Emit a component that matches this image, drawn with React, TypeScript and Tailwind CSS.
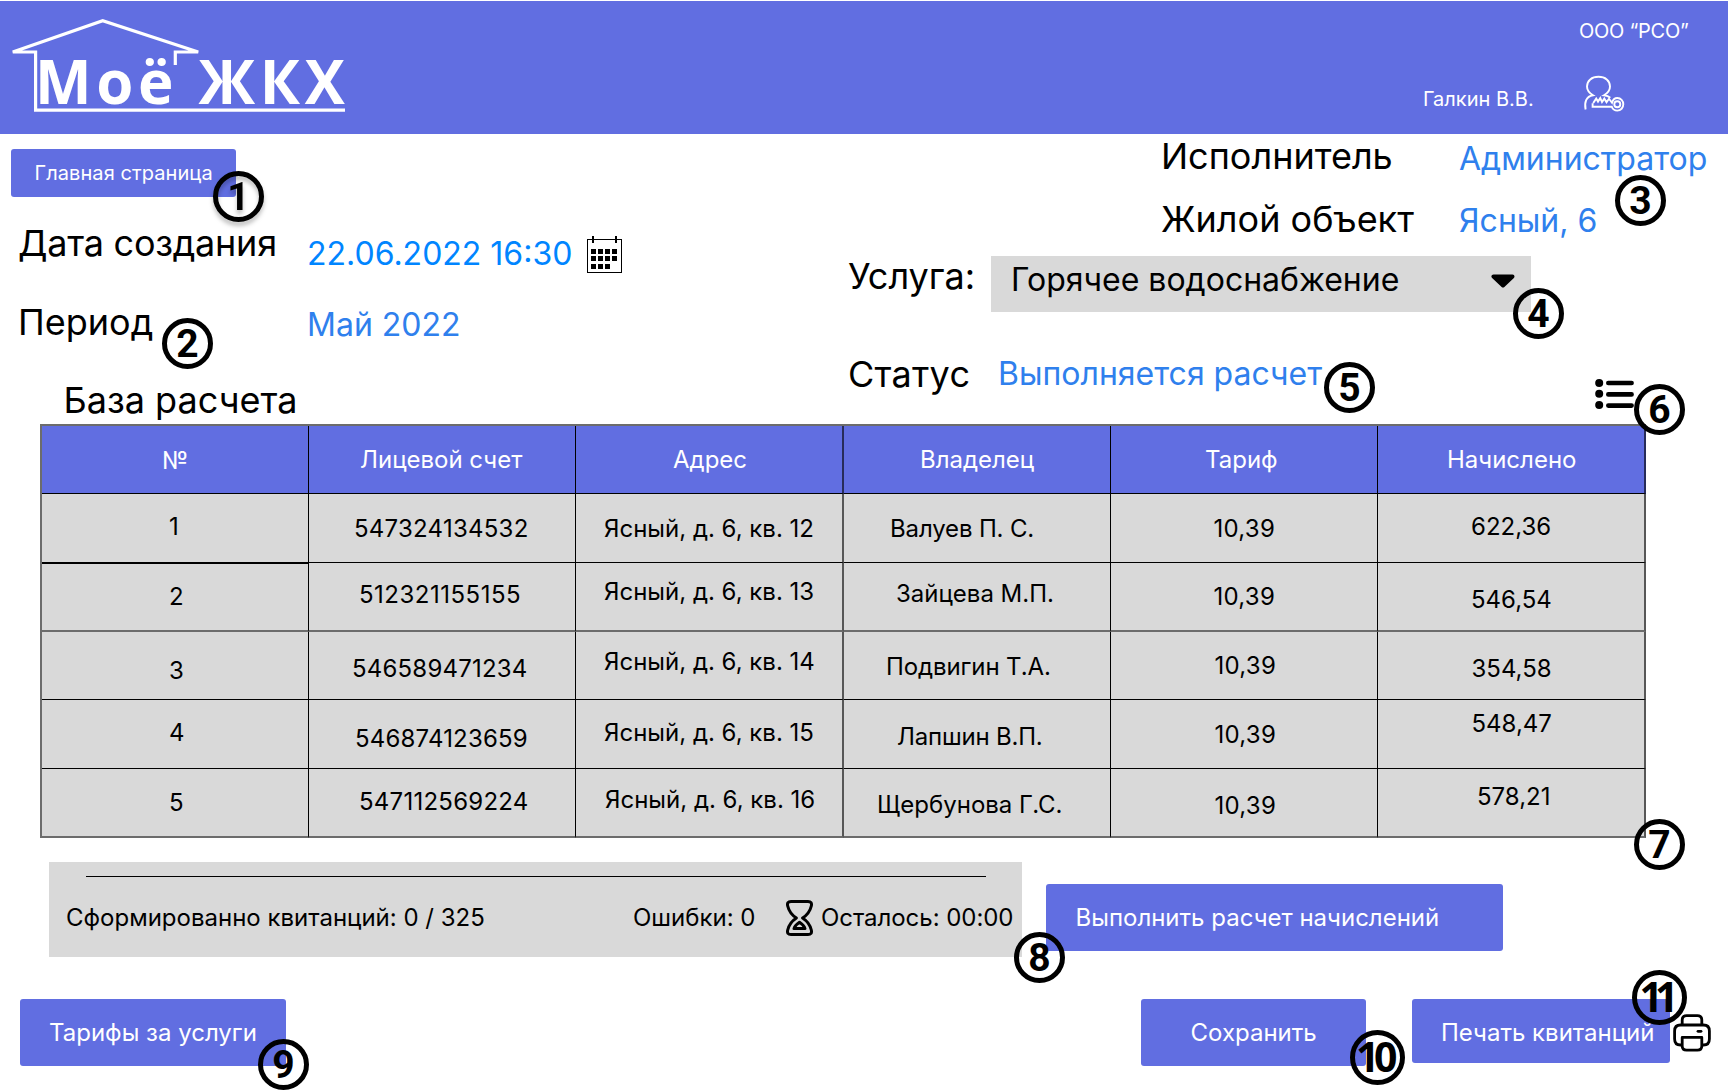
import React from "react";

type Cell = { text: string; pos: string };

const header: Cell[] = [
  { text: "№", pos: "pt-[23px] pl-[120px]" },
  { text: "Лицевой счет", pos: "pt-[22px] pl-[51px]" },
  { text: "Адрес", pos: "pt-[22px] pl-[97px]" },
  { text: "Владелец", pos: "pt-[22px] pl-[76px]" },
  { text: "Тариф", pos: "pt-[22px] pl-[94px]" },
  { text: "Начислено", pos: "pt-[22px] pl-[69px]" },
];

const rows: { height: string; line: string; firstLine: string; cells: Cell[] }[] = [
  {
    height: "h-[69px]",
    line: "border-b border-black",
    firstLine: "border-b border-black",
    cells: [
      { text: "1", pos: "pt-[21px] pl-[127px]" },
      { text: "547324134532", pos: "pt-[23px] pl-[45px] tracking-[0.25px]" },
      { text: "Ясный, д. 6, кв. 12", pos: "pt-[23px] pl-[28px]" },
      { text: "Валуев П. С.", pos: "pt-[23px] pl-[46px] tracking-[-0.15px]" },
      { text: "10,39", pos: "pt-[23px] pl-[102.5px] tracking-[0.25px]" },
      { text: "622,36", pos: "pt-[21px] pl-[93px]" },
    ],
  },
  {
    height: "h-[69px]",
    line: "border-b-2 border-[#6c6c6c]",
    firstLine: "border-t border-b-2 border-t-black border-b-[#6c6c6c]",
    cells: [
      { text: "2", pos: "pt-[21px] pl-[127px]" },
      { text: "512321155155", pos: "pt-[20px] pl-[50px] tracking-[0.5px]" },
      { text: "Ясный, д. 6, кв. 13", pos: "pt-[17px] pl-[28px]" },
      { text: "Зайцева М.П.", pos: "pt-[19px] pl-[52px]" },
      { text: "10,39", pos: "pt-[22px] pl-[102.5px] tracking-[0.25px]" },
      { text: "546,54", pos: "pt-[25px] pl-[93px]" },
    ],
  },
  {
    height: "h-[68px]",
    line: "border-b border-black",
    firstLine: "border-b border-black",
    cells: [
      { text: "3", pos: "pt-[27px] pl-[127px]" },
      { text: "546589471234", pos: "pt-[25px] pl-[43px] tracking-[0.2px]" },
      { text: "Ясный, д. 6, кв. 14", pos: "pt-[18px] pl-[28px]" },
      { text: "Подвигин Т.А.", pos: "pt-[23px] pl-[42px] tracking-[-0.1px]" },
      { text: "10,39", pos: "pt-[22px] pl-[103.5px] tracking-[0.25px]" },
      { text: "354,58", pos: "pt-[25px] pl-[93.5px]" },
    ],
  },
  {
    height: "h-[69px]",
    line: "border-b border-black",
    firstLine: "border-b border-black",
    cells: [
      { text: "4", pos: "pt-[21px] pl-[127px]" },
      { text: "546874123659", pos: "pt-[27px] pl-[46px] tracking-[0.18px]" },
      { text: "Ясный, д. 6, кв. 15", pos: "pt-[21px] pl-[28px]" },
      { text: "Лапшин В.П.", pos: "pt-[25px] pl-[53px] tracking-[-0.2px]" },
      { text: "10,39", pos: "pt-[23px] pl-[103.5px] tracking-[0.25px]" },
      { text: "548,47", pos: "pt-[12px] pl-[93.5px]" },
    ],
  },
  {
    height: "h-[69px]",
    line: "border-b-2 border-[#6c6c6c]",
    firstLine: "border-b-2 border-[#6c6c6c]",
    cells: [
      { text: "5", pos: "pt-[22px] pl-[127px]" },
      { text: "547112569224", pos: "pt-[21px] pl-[50px] tracking-[0.25px]" },
      { text: "Ясный, д. 6, кв. 16", pos: "pt-[19px] pl-[29px]" },
      { text: "Щербунова Г.С.", pos: "pt-[24px] pl-[33px]" },
      { text: "10,39", pos: "pt-[25px] pl-[103.5px] tracking-[0.25px]" },
      { text: "578,21", pos: "pt-[16px] pl-[99px]" },
    ],
  },
];

const columnLines = [
  "border-r border-r-black",
  "border-r border-r-black",
  "border-r-2 border-r-black/60",
  "border-r border-r-black",
  "border-r border-r-black",
  "border-r-2 border-r-black/60",
];

const callouts = [
  { mark: "1", pos: "left-[213px] top-[171px] drop-shadow-[0_4px_2px_rgba(0,0,0,0.25)]" },
  { mark: "2", pos: "left-[162px] top-[318px]" },
  { mark: "3", pos: "left-[1615px] top-[175px]" },
  { mark: "4", pos: "left-[1513px] top-[288px]" },
  { mark: "5", pos: "left-[1324px] top-[362px]" },
  { mark: "6", pos: "left-[1634px] top-[384px]" },
  { mark: "7", pos: "left-[1634px] top-[819px]" },
  { mark: "8", pos: "left-[1014px] top-[932px]" },
  { mark: "9", pos: "left-[258px] top-[1039px]" },
];

const wideCallouts = [
  { mark: "10", pos: "left-[1350px] top-[1030px] tracking-[-5.5px] pr-[7px]" },
  { mark: "11", pos: "left-[1632px] top-[970px] tracking-[-8px] pr-[9px]" },
];

function Logo() {
  return (
    <div className="relative h-[133px] w-[360px]">
      <svg className="absolute left-0 top-0" width="360" height="133" viewBox="0 1 360 133" fill="none" stroke="white" strokeWidth="3.2">
        <path d="M345 110.2H35.6V52H12.8L102.7 20.8L198.2 52H175.3V65" />
      </svg>
      <div className="absolute left-[35px] top-[50px] whitespace-nowrap font-['Open_Sans'] text-[60px] leading-[60px] font-bold tracking-[4.7px] text-white">
        Моё ЖКХ
      </div>
    </div>
  );
}

function UserKeyIcon() {
  return (
    <svg className="-mt-px" width="42" height="38" viewBox="0 0 42 38" fill="none" stroke="white" strokeWidth="1.9">
      <path d="M2.6 34.5C1.2 27.5 3 21.5 10 20.3C6.2 18 4 15.5 4 11.6C4 5.5 8.8 1.8 15.5 1.8S27 5.5 27 11.6C27 15.5 25 18 21 20.3C23.5 20.6 25.6 21.3 27.3 22.8" />
      <path d="M10.2 28L13.2 23.6L15 26.6L17.3 23L19 27L21.3 23.6L23.5 27.3L26 23.8L29 27.8C30 24.5 31.8 23 34.3 23C37.8 23 40.3 25.8 40.3 29.3S37.8 35.6 34.3 35.6C31.6 35.6 29.6 34 28.8 31.8H9.6V28.3" />
      <circle cx="34.3" cy="29.3" r="3" />
    </svg>
  );
}

function CalendarIcon() {
  return (
    <svg width="36" height="37" viewBox="0 0 36 37" shapeRendering="crispEdges">
      <path d="M0.5 3.5H34.5V36H0.5Z" fill="none" stroke="black" />
      <path d="M5 0h2v7H5zM28 0h2v7H28z" />
      <path d="M4 13h5v5H4zM11 13h5v5h-5zM18 13h5v5h-5zM25 13h5v5h-5zM4 20h5v5H4zM11 20h5v5h-5zM18 20h5v5h-5zM25 20h5v5h-5zM4 28h5v5H4zM11 28h5v5h-5zM18 28h5v5h-5z" />
    </svg>
  );
}

function ListIcon() {
  return (
    <svg width="40" height="32" viewBox="0 0 40 32" stroke="black" strokeWidth="4.6" strokeLinecap="round">
      <circle cx="4.2" cy="4" r="4" stroke="none" />
      <circle cx="4.2" cy="14.8" r="4" stroke="none" />
      <circle cx="4.2" cy="26" r="4" stroke="none" />
      <path d="M13.3 4H36.6M13.3 15.4H36.6M13.3 26.6H36.6" />
    </svg>
  );
}

function HourglassIcon() {
  return (
    <svg width="28" height="36" viewBox="0 0 28 36" fill="none" stroke="black" strokeWidth="3" strokeLinejoin="round">
      <path d="M5 1.5H22C25 1.5 26 3 25.3 6C24 11.5 22 14.5 16.6 18C22 21.5 24 24.5 25.3 30C26 33 25 34.5 22 34.5H5C2 34.5 1 33 1.7 30C3 24.5 5 21.5 10.4 18C5 14.5 3 11.5 1.7 6C1 3 2 1.5 5 1.5Z" />
      <path d="M8 28.6H19C18.2 25.6 16.4 24 13.5 22.2C10.6 24 8.8 25.6 8 28.6Z" />
    </svg>
  );
}

function PrinterIcon() {
  return (
    <svg width="38" height="38" viewBox="0 0 38 38" fill="none" stroke="black" strokeWidth="2.8">
      <path d="M9.2 11V6C9.2 3 10.8 1.6 13.6 1.6H24.4C27.2 1.6 28.8 3 28.8 6V11" />
      <path d="M9 31H7.5C3.5 31 1.6 28.8 1.6 25V17C1.6 13 3.6 11 7.5 11H30.5C34.4 11 36.4 13 36.4 17V25C36.4 28.8 34.5 31 30.5 31H29" />
      <path d="M9.2 23.4H28.8V32C28.8 34.8 27.2 36.2 24.4 36.2H13.6C10.8 36.2 9.2 34.8 9.2 32Z" strokeLinejoin="round" />
      <path d="M25 17.3H28" strokeLinecap="round" />
    </svg>
  );
}

export default function App() {
  return (
    <div className="relative h-[1090px] w-[1728px] overflow-hidden bg-white pt-px font-['Inter',sans-serif] text-black">
      <header className="flex h-[133px] justify-between bg-[#616ee1] text-[20px] leading-[20px] text-white">
        <Logo />
        <div className="w-[305px] whitespace-nowrap">
          <div className="pt-[20px] pl-[156px] tracking-[-0.25px]">ООО “РСО”</div>
          <div className="mt-[35px] flex">
            <div className="w-[160px] pt-[13px]">Галкин В.В.</div>
            <UserKeyIcon />
          </div>
        </div>
      </header>

      <section className="flex h-[290px] whitespace-nowrap">
        <div className="w-[848px]">
          <button className="mt-[15px] ml-[11px] flex h-[48px] w-[225px] rounded-[3px] bg-[#616ee1] pt-[14px] pl-[23.5px] text-[20px] leading-[20px] tracking-[0.08px] text-white">
            Главная страница
          </button>
          <div className="mt-[28px] flex h-[79px] pl-[18px]">
            <div className="w-[289px] text-[36px] leading-[36px] tracking-[-0.25px]">Дата создания</div>
            <div className="w-[280px] pt-[13px] text-[32px] leading-[32px] text-[#0085ff]">22.06.2022 16:30</div>
            <div className="pt-[11px]"><CalendarIcon /></div>
          </div>
          <div className="flex h-[78px] pl-[18px]">
            <div className="w-[289px] text-[36px] leading-[36px]">Период</div>
            <div className="pt-[5px] text-[32px] leading-[32px] text-[#2f80ed]">Май 2022</div>
          </div>
          <h2 className="pl-[63.5px] text-[36px] leading-[36px]">База расчета</h2>
        </div>
        <div className="w-[880px]">
          <div className="flex h-[63px] pt-[4px] pl-[313px]">
            <div className="w-[298px] text-[36px] leading-[36px]">Исполнитель</div>
            <div className="pt-[5px] text-[32px] leading-[32px] text-[#2f80ed]">Администратор</div>
          </div>
          <div className="flex h-[59px] pt-[4px] pl-[313px]">
            <div className="w-[298px] text-[36px] leading-[36px]">Жилой объект</div>
            <div className="pt-[4px] text-[32px] leading-[32px] text-[#2f80ed]">Ясный, 6</div>
          </div>
          <div className="flex h-[100px]">
            <div className="w-[143px] pt-[2px] text-[36px] leading-[36px]">Услуга:</div>
            <div className="flex h-[56px] w-[540px] justify-between bg-[#d9d9d9] pt-[8px] pr-[16.5px] pl-[20px] text-[32px] leading-[32px]">
              Горячее водоснабжение
              <svg className="mt-[10px]" width="24" height="15" viewBox="0 0 24 15">
                <path d="M2.5 2.5H21.5L12 11.5Z" stroke="black" strokeWidth="4" strokeLinejoin="round" />
              </svg>
            </div>
          </div>
          <div className="flex">
            <div className="w-[150px] text-[36px] leading-[36px] tracking-[0.25px]">Статус</div>
            <div className="w-[597px] pt-[2px] text-[32px] leading-[32px] text-[#2f80ed]">Выполняется расчет</div>
            <div className="pt-[23px]"><ListIcon /></div>
          </div>
        </div>
      </section>

      <div className="ml-[40px] w-[1606px] border-t-2 border-l-2 border-[#6c6c6c] bg-[#d9d9d9] text-[24px] leading-[24px] whitespace-nowrap">
        <div className="grid h-[68px] grid-cols-[267px_267px_268px_267px_267px_268px] bg-[#616ee1] text-white">
          {header.map((cell, i) => (
            <div key={cell.text} className={`border-b border-b-black ${columnLines[i]} ${cell.pos}`}>{cell.text}</div>
          ))}
        </div>
        {rows.map((row, r) => (
          <div key={r} className={`grid grid-cols-[267px_267px_268px_267px_267px_268px] ${row.height}`}>
            {row.cells.map((cell, i) => (
              <div key={i} className={`${i === 0 ? row.firstLine : row.line} ${columnLines[i]} ${cell.pos}`}>{cell.text}</div>
            ))}
          </div>
        ))}
      </div>

      <section className="flex h-[137px] text-[24px] leading-[24px] whitespace-nowrap">
        <div className="mt-[24px] ml-[49px] h-[95px] w-[973px] bg-[#d9d9d9] pt-[14px]">
          <div className="ml-[37px] h-px w-[900px] bg-black" />
          <div className="flex pt-[23px] pl-[17px]">
            <div className="w-[567px] pt-[6px]">Сформированно квитанций: 0 / 325</div>
            <div className="w-[153px] pt-[6px]">Ошибки: 0</div>
            <HourglassIcon />
            <div className="pt-[6px] pl-[7px] tracking-[-0.05px]">Осталось: 00:00</div>
          </div>
        </div>
        <button className="mt-[46px] ml-[24px] flex h-[67px] w-[457px] rounded-[3px] bg-[#616ee1] pt-[22px] pl-[29.5px] text-white">
          Выполнить расчет начислений
        </button>
      </section>

      <footer className="flex pt-[24px] pl-[20px] text-[24px] leading-[24px] whitespace-nowrap text-white">
        <button className="flex h-[67px] w-[266px] rounded-[3px] bg-[#616ee1] pt-[22px] pl-[29px]">Тарифы за услуги</button>
        <button className="ml-[855px] flex h-[67px] w-[225px] rounded-[3px] bg-[#616ee1] pt-[22px] pl-[49.5px]">Сохранить</button>
        <button className="ml-[46px] flex h-[64px] w-[258px] rounded-[3px] bg-[#616ee1] pt-[22px] pl-[29px]">Печать квитанций</button>
        <div className="pt-[15px] pl-[3px]"><PrinterIcon /></div>
      </footer>

      {callouts.map((c) => (
        <div key={c.mark} className={`absolute flex h-[51px] w-[51px] items-center justify-center rounded-full border-[5px] border-black pt-[2px] font-['Roboto'] text-[39px] leading-none font-bold ${c.pos}`}>
          {c.mark}
        </div>
      ))}
      {wideCallouts.map((c) => (
        <div key={c.mark} className={`absolute flex h-[55px] w-[55px] items-center justify-center rounded-full border-[5.5px] border-black pb-[2px] font-['Open_Sans'] text-[41px] leading-none font-bold ${c.pos}`}>
          {c.mark}
        </div>
      ))}
    </div>
  );
}
